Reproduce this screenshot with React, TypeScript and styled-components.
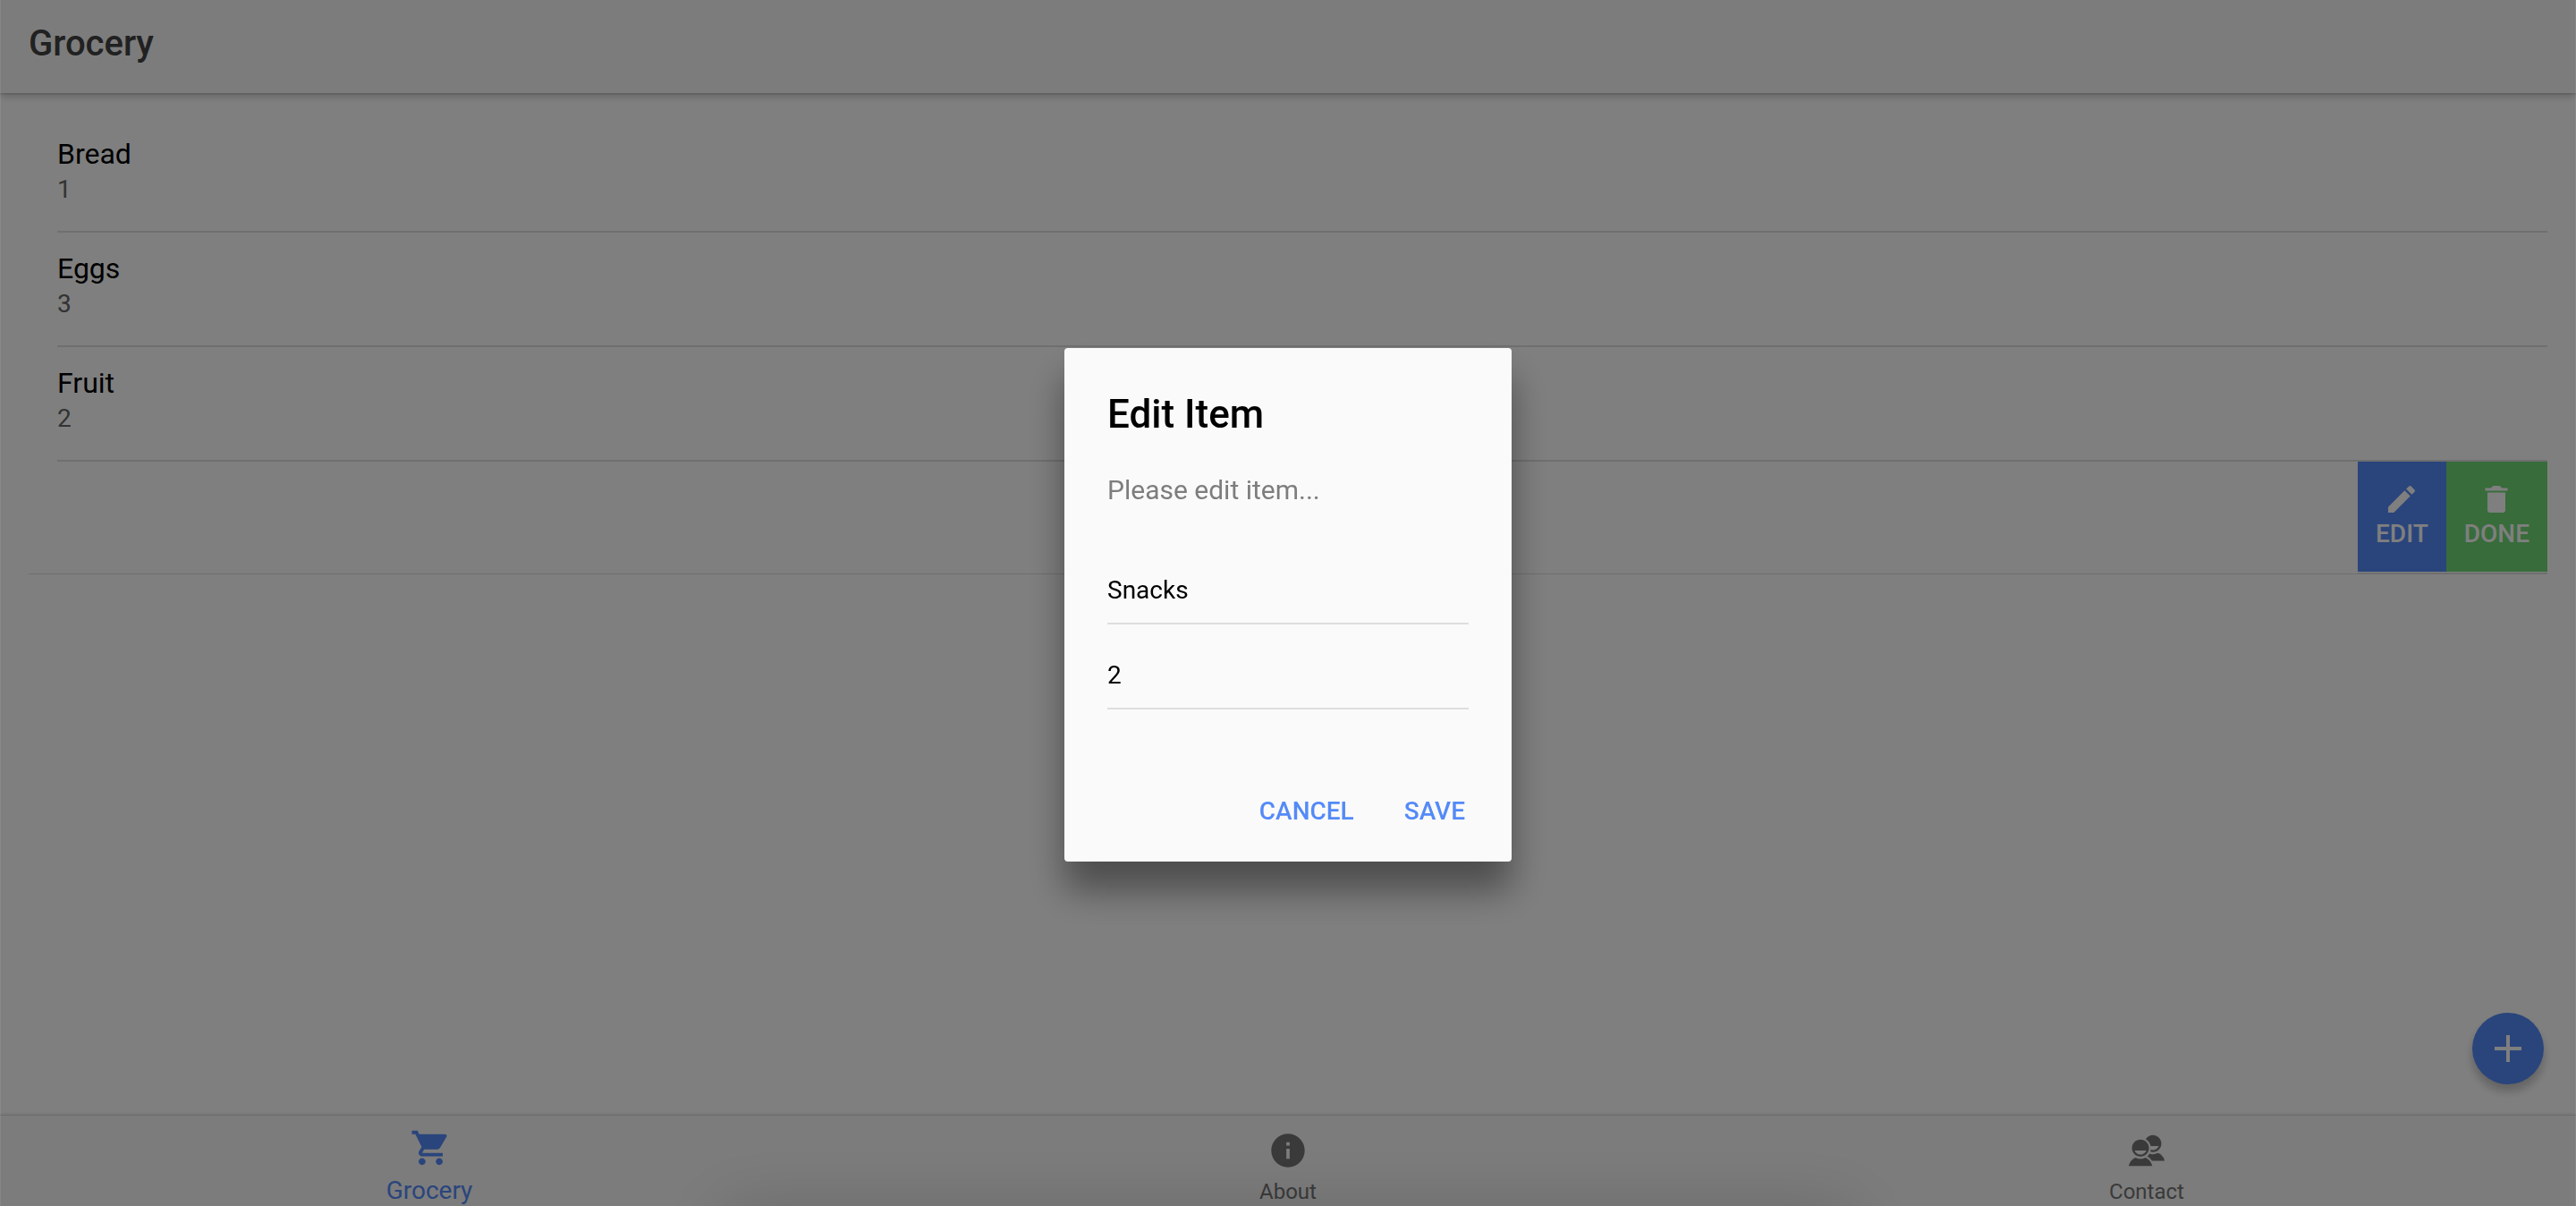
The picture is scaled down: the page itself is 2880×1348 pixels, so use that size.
import React, { useState } from "react";
import styled, { createGlobalStyle } from "styled-components";
import {
  IoMdAdd,
  IoMdCart,
  IoMdContacts,
  IoMdCreate,
  IoMdInformationCircle,
} from "react-icons/io";

const GlobalStyle = createGlobalStyle`
  *, *::before, *::after { box-sizing: border-box; }
  body { margin: 0; font-family: Roboto, "Noto Sans", sans-serif; overflow: hidden; }
`;

const Page = styled.div`
  display: flex;
  flex-direction: column;
  height: 100vh;
  overflow: hidden;
  background: #fff;
  color: #000;
`;

const Header = styled.header`
  flex: none;
  display: flex;
  align-items: center;
  height: 104px;
  padding: 0 32px 6px;
  background: #f8f8f8;
  box-shadow: 0 2px 0 rgba(0, 0, 0, 0.08), 0 4px 8px rgba(0, 0, 0, 0.2);
`;

const Title = styled.h1`
  margin: 0;
  font-size: 40px;
  line-height: 48px;
  font-weight: 500;
  color: #424242;
`;

const Content = styled.main`
  flex: 1;
  min-height: 0;
  display: flex;
  flex-direction: column;
  padding: 28px 32px 35px;
`;

const List = styled.ul`
  margin: 0;
  padding: 0;
  list-style: none;
  border-bottom: 1px solid #dedede;
`;

const Item = styled.li`
  height: 128px;
  margin-left: 32px;
  padding-top: 21px;
  border-bottom: 2px solid #dedede;
`;

const ItemName = styled.h2`
  margin: 0;
  font-size: 32px;
  line-height: 38px;
  font-weight: 400;
`;

const ItemCount = styled.p`
  margin: 4px 0 0;
  font-size: 28px;
  line-height: 34px;
  color: #666;
`;

const OpenItem = styled.li`
  display: flex;
  justify-content: flex-end;
  height: 125px;
`;

const Options = styled.div`
  display: flex;
  height: 126px;
  padding-bottom: 1px;
  border-bottom: 2px solid #dedede;
`;

const Button = styled.button`
  margin: 0;
  border: 0;
  font-family: inherit;
  font-size: 28px;
  line-height: 34px;
  font-weight: 500;
`;

const OptionButton = styled(Button)<{ $color: string }>`
  display: flex;
  flex-direction: column;
  align-items: center;
  justify-content: center;
  gap: 2px;
  padding: 0 20px 4px;
  background: ${(p) => p.$color};
  color: #fff;
  svg {
    width: 40px;
    height: 40px;
  }
`;

const Fab = styled(Button)`
  display: grid;
  place-items: center;
  width: 80px;
  height: 80px;
  margin: auto 4px 0 auto;
  padding: 0;
  border-radius: 50%;
  background: #548af8;
  color: #fff;
  box-shadow: 0 8px 12px rgba(0, 0, 0, 0.14), 0 8px 10px rgba(0, 0, 0, 0.1);
  svg {
    width: 48px;
    height: 48px;
  }
`;

const Tabs = styled.nav`
  flex: none;
  display: flex;
  height: 101px;
  background: #f8f8f8;
  box-shadow: 0 -1px 0 rgba(0, 0, 0, 0.07), 0 -2px 3px rgba(0, 0, 0, 0.1);
`;

const Tab = styled.a<{ $active?: boolean }>`
  flex: 1;
  display: flex;
  flex-direction: column;
  align-items: center;
  gap: ${(p) => (p.$active ? 8 : 7)}px;
  padding-top: ${(p) => (p.$active ? 12 : 16)}px;
  color: ${(p) => (p.$active ? "#548af8" : "#757575")};
  font-size: ${(p) => (p.$active ? 28 : 24)}px;
  line-height: 32px;
  text-decoration: none;
  svg {
    width: 48px;
    height: 48px;
  }
`;

const Backdrop = styled.div`
  position: fixed;
  inset: 0;
  z-index: 1;
  display: grid;
  place-items: center;
  padding-top: 4px;
  overflow: hidden;
  background: rgba(0, 0, 0, 0.5);
  border: solid rgba(255, 255, 255, 0.08);
  border-width: 0 1px;
`;

const BottomShade = styled.div`
  position: absolute;
  left: 28%;
  right: 28%;
  top: 100%;
  height: 80px;
  box-shadow: 0 4px 80px rgba(0, 0, 0, 0.17);
`;

const Dialog = styled.form`
  width: 500px;
  padding: 48px 0 19px;
  border-radius: 4px;
  background: #fafafa;
  color: #000;
  box-shadow: 0 32px 40px rgba(0, 0, 0, 0.4);
`;

const DialogBody = styled.div`
  padding: 0 48px;
`;

const DialogTitle = styled.h2`
  margin: 0;
  font-size: 44px;
  line-height: 52px;
  font-weight: 500;
`;

const Message = styled.p`
  margin: 41px 0 60px;
  font-size: 30px;
  line-height: 36px;
  color: #7d7d7d;
`;

const Field = styled.input`
  display: block;
  width: 100%;
  height: 72px;
  margin: 0 0 23px;
  padding: 0 0 3px;
  border: 0;
  border-bottom: 2px solid #dedede;
  border-radius: 0;
  outline: none;
  background: transparent;
  color: #000;
  font-family: inherit;
  font-size: 28px;
  line-height: 34px;
`;

const Actions = styled.div`
  display: flex;
  justify-content: flex-end;
  gap: 16px;
  padding: 54px 32px 0;
`;

const ActionButton = styled(Button)`
  padding: 20px;
  background: transparent;
  color: #548af8;
`;

const TrashIcon = () => (
  <svg viewBox="0 0 40 40" fill="currentColor" aria-hidden="true">
    <path d="M10 12.5h20V32a3 3 0 0 1-3 3H13a3 3 0 0 1-3-3z" />
    <path d="M32.5 7.5v3h-25v-3h6.2L16.5 5h7l2.8 2.5z" />
  </svg>
);

const groceries = [
  { name: "Bread", count: 1 },
  { name: "Eggs", count: 3 },
  { name: "Fruit", count: 2 },
];

export default function App() {
  const [name, setName] = useState("Snacks");
  const [count, setCount] = useState("2");

  return (
    <>
      <GlobalStyle />
      <Page>
        <Header>
          <Title>Grocery</Title>
        </Header>
        <Content>
          <List>
            {groceries.map((g) => (
              <Item key={g.name}>
                <ItemName>{g.name}</ItemName>
                <ItemCount>{g.count}</ItemCount>
              </Item>
            ))}
            <OpenItem>
              <Options>
                <OptionButton type="button" $color="#548af8">
                  <IoMdCreate />
                  EDIT
                </OptionButton>
                <OptionButton type="button" $color="#70d876">
                  <TrashIcon />
                  DONE
                </OptionButton>
              </Options>
            </OpenItem>
          </List>
          <Fab type="button" aria-label="Add item">
            <IoMdAdd />
          </Fab>
        </Content>
        <Tabs>
          <Tab href="#grocery" $active>
            <IoMdCart />
            Grocery
          </Tab>
          <Tab href="#about">
            <IoMdInformationCircle />
            About
          </Tab>
          <Tab href="#contact">
            <IoMdContacts />
            Contact
          </Tab>
        </Tabs>
      </Page>
      <Backdrop>
        <BottomShade />
        <Dialog
          role="dialog"
          aria-labelledby="dialog-title"
          onSubmit={(e) => e.preventDefault()}
        >
          <DialogBody>
            <DialogTitle id="dialog-title">Edit Item</DialogTitle>
            <Message>Please edit item...</Message>
            <Field aria-label="Name" value={name} onChange={(e) => setName(e.target.value)} />
            <Field aria-label="Quantity" value={count} onChange={(e) => setCount(e.target.value)} />
          </DialogBody>
          <Actions>
            <ActionButton type="button">CANCEL</ActionButton>
            <ActionButton type="submit">SAVE</ActionButton>
          </Actions>
        </Dialog>
      </Backdrop>
    </>
  );
}
